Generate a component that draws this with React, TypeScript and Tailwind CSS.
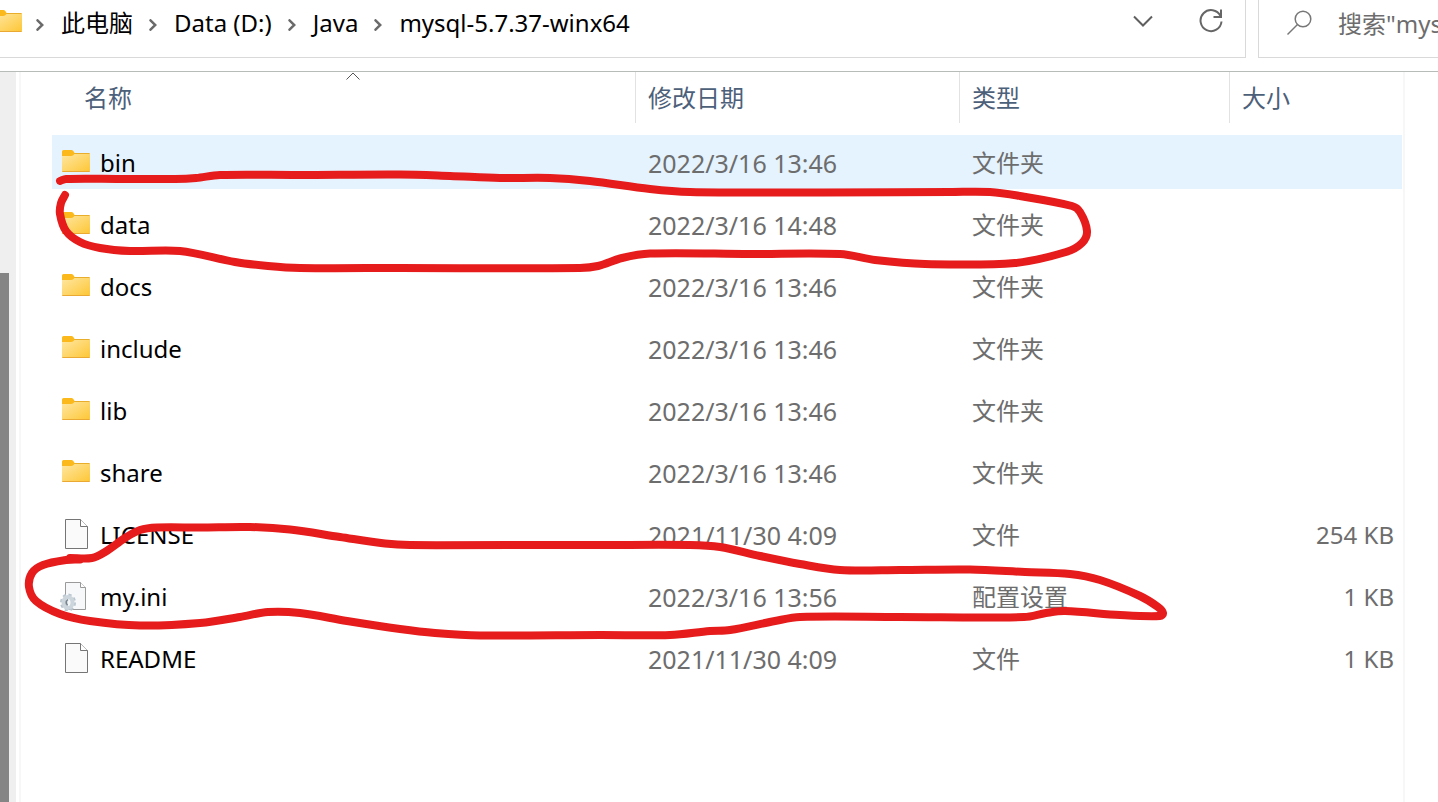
import { Fragment } from "react";
import clsx from "clsx";

type Kind = "folder" | "file" | "ini";

type Entry = {
  name: string;
  date: string;
  type: string;
  size?: string;
  kind: Kind;
  hovered?: boolean;
};

const path = ["此电脑", "Data (D:)", "Java", "mysql-5.7.37-winx64"];

const entries: Entry[] = [
  { name: "bin", date: "2022/3/16 13:46", type: "文件夹", kind: "folder", hovered: true },
  { name: "data", date: "2022/3/16 14:48", type: "文件夹", kind: "folder" },
  { name: "docs", date: "2022/3/16 13:46", type: "文件夹", kind: "folder" },
  { name: "include", date: "2022/3/16 13:46", type: "文件夹", kind: "folder" },
  { name: "lib", date: "2022/3/16 13:46", type: "文件夹", kind: "folder" },
  { name: "share", date: "2022/3/16 13:46", type: "文件夹", kind: "folder" },
  { name: "LICENSE", date: "2021/11/30 4:09", type: "文件", size: "254 KB", kind: "file" },
  { name: "my.ini", date: "2022/3/16 13:56", type: "配置设置", size: "1 KB", kind: "ini" },
  { name: "README", date: "2021/11/30 4:09", type: "文件", size: "1 KB", kind: "file" },
];

const FolderShape = () => (
  <>
    <defs>
      <linearGradient id="folder" x1="0" y1="0" x2="1" y2="1">
        <stop offset="0" stopColor="#ffe7a2" />
        <stop offset="1" stopColor="#fdc634" />
      </linearGradient>
    </defs>
    <path d="M0 1.5Q0 0 1.5 0H9.5Q10.5 0 11.3 1L12.6 3H26.5Q28 3 28 4.5V8H0Z" fill="#fcb91b" />
    <path d="M0 6H9Q10.5 6 11.5 5L12.4 4H28V20.5Q28 22 26.5 22H1.5Q0 22 0 20.5Z" fill="url(#folder)" />
    <path d="M0.3 21.5H27.7" stroke="#e9a932" />
    <path d="M12.4 3.5H27.5" stroke="#e9ad2c" />
  </>
);

const EntryIcon = ({ kind }: { kind: Kind }) => {
  if (kind === "folder") {
    return (
      <svg width="28" height="22" viewBox="0 0 28 22" className="mb-0.5 ml-0.5 shrink-0" aria-hidden="true">
        <FolderShape />
      </svg>
    );
  }
  if (kind === "file") {
    return (
      <svg width="30" height="30" viewBox="0 0 30 30" className="shrink-0" aria-hidden="true">
        <path d="M5.5 0.5H20.5L27.5 7.5V29.5H5.5Z" fill="#fafafa" stroke="#757575" />
        <path d="M20.5 0.5V7.5H27.5" fill="#fff" stroke="#757575" />
      </svg>
    );
  }
  return (
    <svg width="30" height="30" viewBox="0 0 30 30" className="shrink-0" aria-hidden="true">
      <path d="M5.5 1.5H20.5L25.5 6.5V28.5H5.5Z" fill="#f7f8f9" stroke="#9a9a9a" />
      <path d="M20.5 1.5V6.5H25.5" fill="#fff" stroke="#9a9a9a" />
      <ellipse cx="8" cy="21.5" rx="6.5" ry="7.5" fill="none" stroke="#b9c5ce" strokeWidth="3" strokeDasharray="3 2.5" />
      <ellipse cx="8" cy="21.5" rx="4.5" ry="5.5" fill="none" stroke="#ccd5dc" strokeWidth="4" />
      <ellipse cx="8" cy="21.5" rx="2" ry="3" fill="#f4f6f8" />
      <path d="M8 18.5Q5 20.5 7.5 24.5" fill="none" stroke="#75858f" strokeWidth="1.5" />
    </svg>
  );
};

const Crumb = () => (
  <svg width="8" height="12" viewBox="0 0 8 12" className="mt-1 shrink-0" fill="none" stroke="#6a6a6a" strokeWidth="2.5" aria-hidden="true">
    <path d="M1.5 1.3L6.3 6L1.5 10.7" strokeLinecap="round" />
  </svg>
);

type Point = [number, number];

// Smooth curve running through every point of a pen stroke
const smooth = (pts: Point[]) => {
  let d = `M${pts[0][0]} ${pts[0][1]}`;
  for (let i = 0; i < pts.length - 1; i++) {
    const p0 = pts[i - 1] ?? pts[i];
    const p1 = pts[i];
    const p2 = pts[i + 1];
    const p3 = pts[i + 2] ?? p2;
    // keep the handles short when neighbouring points are far apart
    const len = Math.hypot(p2[0] - p1[0], p2[1] - p1[1]) / 3;
    const handle = (a: Point, b: Point) => {
      const l = Math.hypot(b[0] - a[0], b[1] - a[1]) || 1;
      return [((b[0] - a[0]) / l) * len, ((b[1] - a[1]) / l) * len];
    };
    const h1 = handle(p0, p2);
    const h2 = handle(p1, p3);
    d += `C${p1[0] + h1[0]} ${p1[1] + h1[1]} ${p2[0] - h2[0]} ${p2[1] - h2[1]} ${p2[0]} ${p2[1]}`;
  }
  return d;
};

const dataStroke: Point[] = [
  [60, 181], [66, 179], [120, 179], [175, 179], [196, 178], [220, 175], [300, 175], [400, 174.5], [450, 176],
  [500, 178], [550, 178], [590, 181], [650, 189], [690, 192], [800, 192.5], [950, 192], [990, 192],
  [1020, 196], [1072, 206], [1080, 212], [1087, 231], [1082, 243], [1066, 252], [1015, 263], [925, 264],
  [875, 260], [840, 254], [750, 254], [650, 253.5], [622, 258], [598, 266], [580, 268], [400, 268],
  [300, 268], [268, 266], [235, 262], [180, 251], [130, 251], [100, 248], [80, 242], [66, 231],
  [60, 214], [61, 203], [65, 195],
];

const iniStroke: Point[] = [
  [70, 558], [92, 558], [105, 552], [125, 538], [140, 530], [157, 527.5], [200, 527.5], [250, 527],
  [290, 529.5], [340, 537], [385, 543.5], [410, 545], [600, 545], [690, 545], [720, 547], [760, 556], [800, 564],
  [840, 570], [900, 570], [970, 569.5], [1025, 572], [1070, 574], [1100, 580], [1140, 596], [1158, 607],
  [1163, 613], [1160, 616], [1120, 615], [1065, 611], [1046, 613], [1024, 617], [900, 617], [800, 617],
  [775, 621], [730, 630], [710, 631], [670, 635], [600, 635], [480, 635.5], [435, 633], [400, 629],
  [347, 621], [300, 613], [268, 612], [240, 617], [200, 623], [140, 625.5], [90, 621], [60, 614],
  [36, 601], [29, 587], [32, 573], [43, 565], [66, 560], [80, 559.5],
];

const PenMarks = () => (
  <svg
    width="1438"
    height="802"
    viewBox="0 0 1438 802"
    className="pointer-events-none absolute left-0 top-0"
    fill="none"
    stroke="#e61b1b"
    strokeWidth="8"
    strokeLinecap="round"
    strokeLinejoin="round"
    aria-hidden="true"
  >
    <path d={smooth(dataStroke)} />
    <path d={smooth(iniStroke)} />
  </svg>
);

const AddressBar = () => (
  <div className="flex h-[58px] min-w-0 grow items-start justify-between border-r border-b border-[#d9d9d9] pr-[22px]">
    <nav aria-label="地址" className="flex h-[46px] items-center">
      <svg width="22" height="22" viewBox="6 0 22 22" className="mt-2.5 mr-3.5 shrink-0 self-start" aria-hidden="true">
        <FolderShape />
      </svg>
      {path.map((part) => (
        <Fragment key={part}>
          <Crumb />
          <a href="#" className="mr-4 ml-[17px] whitespace-nowrap">{part}</a>
        </Fragment>
      ))}
    </nav>
    <div className="flex h-[42px] shrink-0 items-center gap-[46px]">
      <button type="button" aria-label="以前的位置">
        <svg width="20" height="12" viewBox="0 0 20 12" fill="none" stroke="#5f5f5f" strokeWidth="2">
          <path d="M1 1.5L10 10.5L19 1.5" />
        </svg>
      </button>
      <button type="button" aria-label="刷新">
        <svg width="24" height="24" viewBox="0 0 24 24" fill="none" stroke="#666" strokeWidth="2">
          <path d="M21.5 7A10.5 10.5 0 1 0 22.5 12.5" />
          <path d="M22 0.5V8H14.5" />
        </svg>
      </button>
    </div>
  </div>
);

const SearchBox = () => (
  <label className="flex h-[58px] w-[180px] shrink-0 items-start border-b border-l border-[#d9d9d9] pl-7">
    <svg width="26" height="26" viewBox="0 0 26 26" className="mt-2.5 shrink-0" fill="none" stroke="#777" strokeWidth="1.5" aria-hidden="true">
      <circle cx="16" cy="9" r="7.8" />
      <path d="M10.5 14.5L0.5 24.5" />
    </svg>
    <input
      type="text"
      aria-label="搜索"
      placeholder={'搜索"mysql-5.7.37-winx64"'}
      className="ml-[25px] h-[46px] min-w-0 grow bg-transparent outline-none placeholder:text-[#6d6d6d]"
    />
  </label>
);

const headCell = "h-[59px] p-0 text-left align-top font-normal";
const headLabel = "flex h-[51px] items-center border-l border-[#e2e2e2] pt-px pl-3";
const cell = "h-[62px] border-y-4 border-transparent bg-clip-padding p-0";

const FileTable = () => (
  <table className="w-full table-fixed border-separate border-spacing-0">
    <thead className="text-[#4c607a]">
      <tr>
        <th scope="col" aria-sort="ascending" className={headCell}>
          <div className="relative flex h-[51px] items-center pt-px pl-8">
            名称
            <svg width="14" height="8" viewBox="0 0 14 8" className="absolute top-0 left-[294px]" fill="none" stroke="#555" aria-hidden="true">
              <path d="M0.5 7.5L7 1L13.5 7.5" />
            </svg>
          </div>
        </th>
        <th scope="col" className={clsx(headCell, "w-[324px]")}><div className={headLabel}>修改日期</div></th>
        <th scope="col" className={clsx(headCell, "w-[270px]")}><div className={headLabel}>类型</div></th>
        <th scope="col" className={clsx(headCell, "w-[173px]")}><div className={headLabel}>大小</div></th>
      </tr>
    </thead>
    <tbody className="text-[#6d6d6d]">
      {entries.map((entry) => (
        <tr key={entry.name} className={clsx(entry.hovered && "[&>td]:bg-[#e5f3ff]")}>
          <td className={cell}>
            <div className="flex items-center gap-2.5 pl-2 text-black">
              <EntryIcon kind={entry.kind} />
              <span className="pt-0.5">{entry.name}</span>
            </div>
          </td>
          <td className={clsx(cell, "pt-0.5 pl-[13px] text-[25px]")}>{entry.date}</td>
          <td className={clsx(cell, "pt-0.5 pl-[13px]")}>{entry.type}</td>
          <td className={clsx(cell, "pt-0.5 pr-2 text-right")}>{entry.size}</td>
        </tr>
      ))}
    </tbody>
  </table>
);

export default function App() {
  return (
    <div className="relative flex min-h-screen flex-col overflow-hidden bg-white font-['Noto_Sans','Noto_Sans_CJK_SC',sans-serif] text-[24px] leading-8 text-black">
      <header className="flex h-[72px] gap-3 border-b border-[#b8bcb8]">
        <AddressBar />
        <SearchBox />
      </header>
      <div className="flex grow">
        <div className="flex w-4 shrink-0 bg-[#efefef] pt-[201px]">
          <div className="w-[9px] bg-[#858585]" />
        </div>
        <main className="mr-[33px] ml-[3px] min-w-0 grow border-x-2 border-[#f7f7f7] pr-px pl-[31px]">
          <FileTable />
        </main>
      </div>
      <PenMarks />
    </div>
  );
}
